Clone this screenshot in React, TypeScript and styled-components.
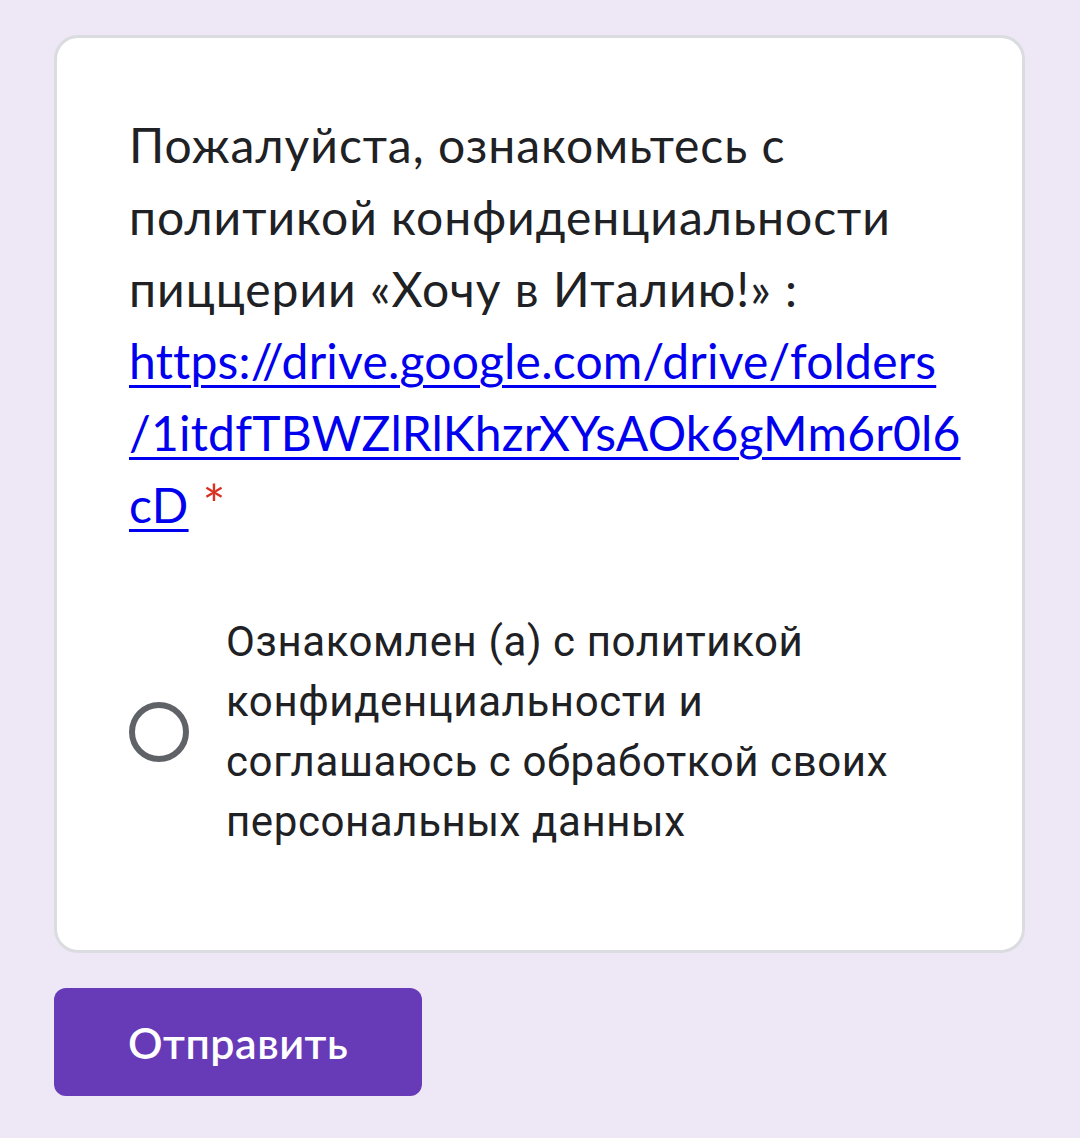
import React from "react";
import styled, { createGlobalStyle } from "styled-components";

const GlobalStyle = createGlobalStyle`
  html, body {
    margin: 0;
    padding: 0;
    background: #ede7f6;
  }
  body {
    font-family: Roboto, Arial, sans-serif;
  }
`;

const Page = styled.div`
  display: flex;
  flex-direction: column;
  align-items: flex-start;
  gap: 35px;
  padding: 35px 55px 0 54px;
  min-height: 1138px;
  box-sizing: border-box;
`;

const Card = styled.div`
  width: 100%;
  box-sizing: border-box;
  background: #fff;
  border: 3px solid #dadce0;
  border-radius: 24px;
  padding: 71px 72px 76px 72px;
  display: flex;
  flex-direction: column;
  gap: 71px;
`;

const Question = styled.div`
  font-family: "Google Sans", Lato, "Open Sans", sans-serif;
  font-size: 48px;
  line-height: 72px;
  color: #202124;
  letter-spacing: 1px;
`;

const Link = styled.a`
  color: #0000ee;
  letter-spacing: 0.2px;
  text-decoration: underline;
  text-decoration-thickness: 3px;
  text-underline-offset: 6px;
`;

const Required = styled.span`
  color: #d93025;
  padding-left: 14px;
  font-size: 54px;
  line-height: 0;
  vertical-align: -1px;
`;

const OptionRow = styled.label`
  display: flex;
  align-items: center;
  gap: 37px;
  padding-bottom: 22px;
  cursor: pointer;
`;

const Radio = styled.span`
  flex: none;
  width: 60px;
  height: 60px;
  box-sizing: border-box;
  border: 6px solid #5f6368;
  border-radius: 50%;
`;

const OptionText = styled.span`
  font-family: Roboto, Arial, sans-serif;
  font-size: 42px;
  line-height: 60px;
  letter-spacing: 0.6px;
  color: #202124;
`;

const SubmitButton = styled.button`
  height: 108px;
  padding: 0 74px;
  border: none;
  border-radius: 12px;
  background: #673ab7;
  color: #fff;
  font-family: "Google Sans", Lato, "Open Sans", sans-serif;
  font-weight: 600;
  font-size: 43px;
  letter-spacing: 0.5px;
  cursor: pointer;
`;

export default function App() {
  return (
    <>
      <GlobalStyle />
      <Page>
        <Card>
          <Question>
            Пожалуйста, ознакомьтесь с<br />
            политикой конфиденциальности<br />
            пиццерии «Хочу в Италию!» :<br />
            <Link href="#">
              https://drive.google.com/drive/folders
              <br />
              /1itdfTBWZlRlKhzrXYsAOk6gMm6r0l6
              <br />
              cD
            </Link>
            <Required>*</Required>
          </Question>
          <OptionRow>
            <Radio />
            <OptionText>
              Ознакомлен (а) с политикой конфиденциальности и соглашаюсь с
              обработкой своих персональных данных
            </OptionText>
          </OptionRow>
        </Card>
        <SubmitButton>Отправить</SubmitButton>
      </Page>
    </>
  );
}
